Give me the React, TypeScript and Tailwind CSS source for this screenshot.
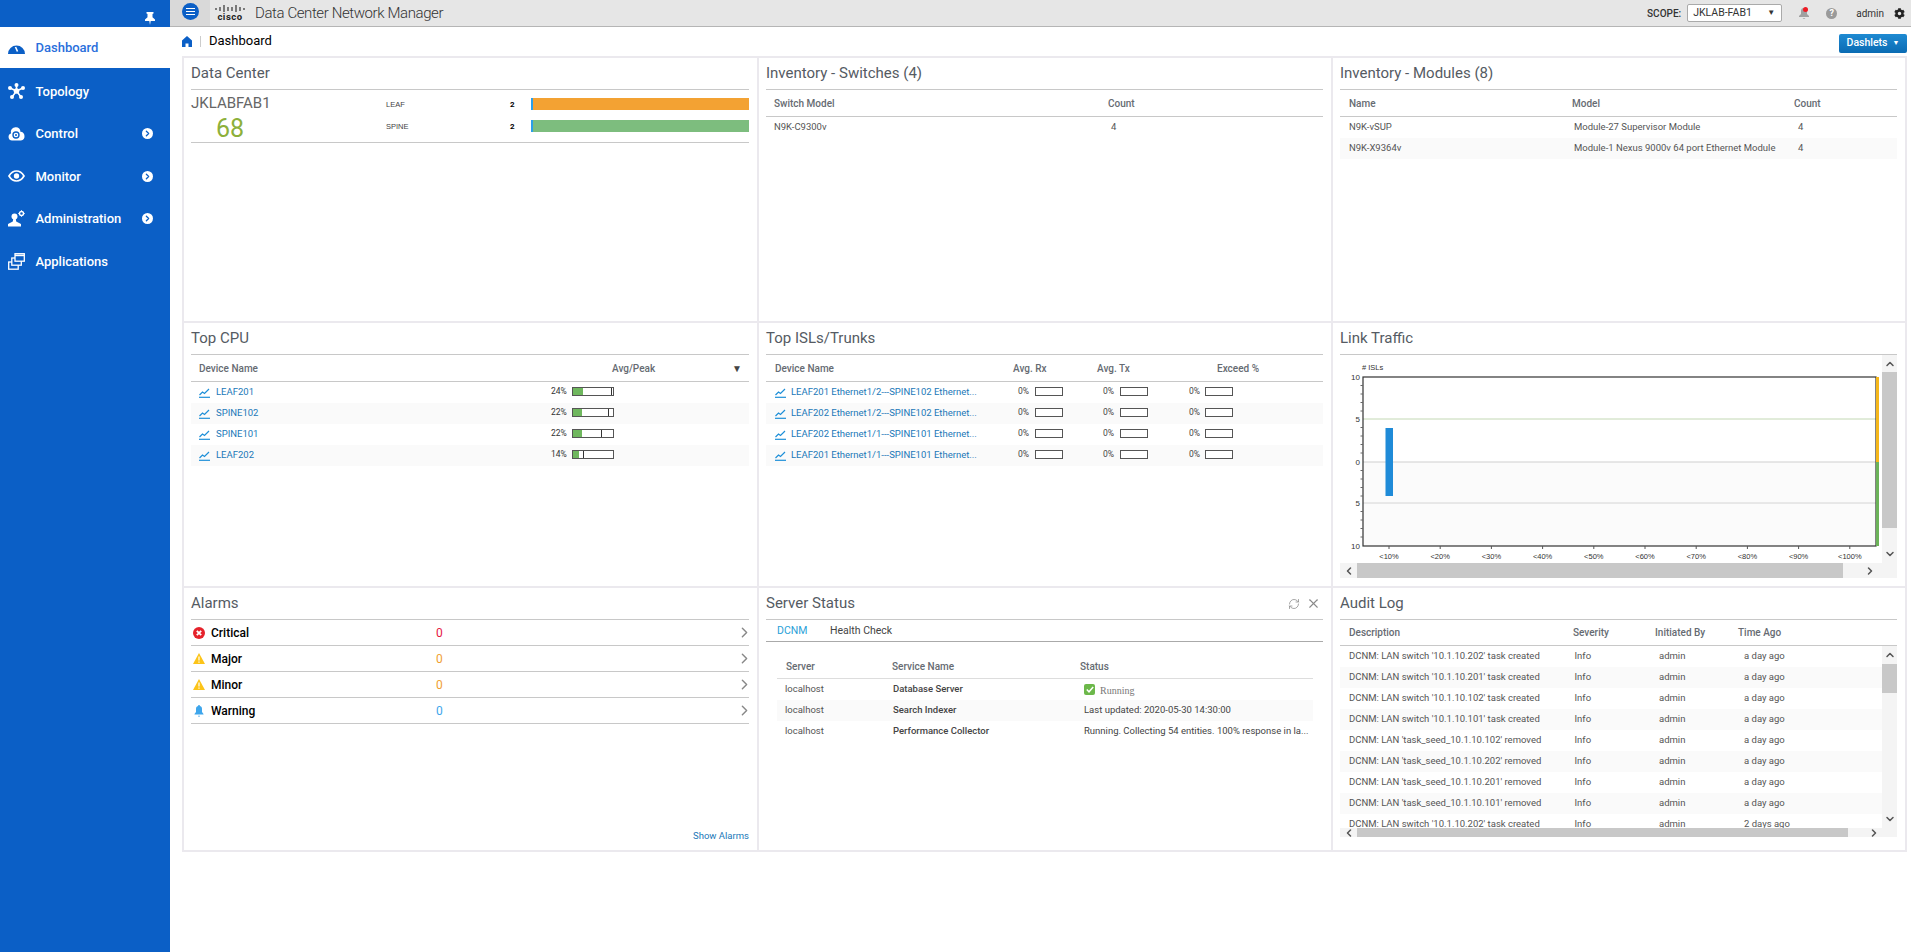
import { ChevronDown, ChevronLeft, ChevronRight, ChevronUp, RefreshCw, X } from 'lucide-react';
import { FaCog } from 'react-icons/fa';
import type { ReactNode } from 'react';

const cpuRows = [
  { name: 'LEAF201', pct: 24, fill: 10, peak: 38 },
  { name: 'SPINE102', pct: 22, fill: 9, peak: 35 },
  { name: 'SPINE101', pct: 22, fill: 9, peak: 28 },
  { name: 'LEAF202', pct: 14, fill: 6, peak: 10 },
];

const islRows = [
  'LEAF201 Ethernet1/2---SPINE102 Ethernet...',
  'LEAF202 Ethernet1/2---SPINE102 Ethernet...',
  'LEAF202 Ethernet1/1---SPINE101 Ethernet...',
  'LEAF201 Ethernet1/1---SPINE101 Ethernet...',
];

const auditRows = [
  ["DCNM: LAN switch '10.1.10.202' task created", 'a day ago'],
  ["DCNM: LAN switch '10.1.10.201' task created", 'a day ago'],
  ["DCNM: LAN switch '10.1.10.102' task created", 'a day ago'],
  ["DCNM: LAN switch '10.1.10.101' task created", 'a day ago'],
  ["DCNM: LAN 'task_seed_10.1.10.102' removed", 'a day ago'],
  ["DCNM: LAN 'task_seed_10.1.10.202' removed", 'a day ago'],
  ["DCNM: LAN 'task_seed_10.1.10.201' removed", 'a day ago'],
  ["DCNM: LAN 'task_seed_10.1.10.101' removed", 'a day ago'],
  ["DCNM: LAN switch '10.1.10.202' task created", '2 days ago'],
];

function GaugeIcon() {
  return (
    <svg width="17" height="13" viewBox="0 0 17 13">
      <path d="M0 13A8.500 8.500 0 0 1 17 13Z" fill="#0b5fc6" />
      <path d="M7.500 6l2 4.500" stroke="#fff" strokeWidth="1.600" />
    </svg>
  );
}

function TopologyIcon() {
  return (
    <svg width="17" height="16" viewBox="0 0 17 16" fill="#fff" stroke="#fff">
      <path d="M8.500 8L8.500 2M8.500 8L2 5M8.500 8L15 5M8.500 8L4 14M8.500 8L13 14" strokeWidth="1.600" />
      <circle cx="8.500" cy="8" r="2.800" stroke="none" />
      <circle cx="8.500" cy="2" r="2" stroke="none" />
      <circle cx="2" cy="5" r="2" stroke="none" />
      <circle cx="15" cy="5" r="2" stroke="none" />
      <circle cx="4" cy="14" r="2" stroke="none" />
      <circle cx="13" cy="14" r="2" stroke="none" />
    </svg>
  );
}

function ControlIcon() {
  return (
    <svg width="17" height="15" viewBox="0 0 17 15">
      <path d="M4 14.500A3.600 3.600 0 0 1 3 7.500 4.800 4.800 0 0 1 8 1.200a4.400 4.400 0 0 1 4.400 4.600A4.400 4.400 0 0 1 13 14.500Z" fill="#fff" />
      <circle cx="8" cy="9" r="3" fill="none" stroke="#0b5fc6" strokeWidth="1.400" />
      <circle cx="8" cy="9" r="1" fill="#0b5fc6" />
    </svg>
  );
}

function EyeIcon() {
  return (
    <svg width="17" height="12" viewBox="0 0 17 12">
      <path d="M1 6C3 2.600 5.600 1 8.500 1S14 2.600 16 6C14 9.400 11.400 11 8.500 11S3 9.400 1 6Z" fill="none" stroke="#fff" strokeWidth="1.700" />
      <circle cx="8.500" cy="6" r="2.700" fill="#fff" />
    </svg>
  );
}

function AdminIcon() {
  return (
    <svg width="17" height="17" viewBox="0 0 17 17">
      <circle cx="6.500" cy="6.500" r="3" fill="#fff" />
      <path d="M5.200 9h2.600l.4 2.600L13 14v2.500H0V14l4.800-2.400Z" fill="#fff" />
      <circle cx="13.500" cy="3.500" r="2" fill="none" stroke="#fff" strokeWidth="1.400" />
      <path d="M13.500 0.300v1M13.500 5.700v1M10.300 3.500h1M15.700 3.500h1" stroke="#fff" strokeWidth="1" />
    </svg>
  );
}

function AppsIcon() {
  return (
    <svg width="17" height="17" viewBox="0 0 17 17" fill="#0b5fc6" stroke="#fff" strokeWidth="1.300">
      <rect x="0.700" y="9" width="9.500" height="7.200" />
      <rect x="3.800" y="5" width="9.500" height="7.200" />
      <rect x="7" y="0.700" width="9.300" height="7.500" />
      <path d="M7 2.400h9.300" strokeWidth="1.600" />
    </svg>
  );
}

function PinIcon() {
  return (
    <svg width="10" height="13" viewBox="0 0 10 13" fill="#fff">
      <path d="M1.500 0h7v1.500L7.500 2v3.200L10 7.500V9H5.700l-.7 4-.7-4H0V7.500l2.500-2.300V2l-1-.5Z" />
    </svg>
  );
}

function TrendIcon() {
  return (
    <svg width="11" height="10" viewBox="0 0 11 10" fill="none" stroke="#1d8fd8" className="shrink-0">
      <path d="M0.500 7L3.500 4l2 1.500L10 1" strokeWidth="1.200" />
      <path d="M0 9.300h11" strokeWidth="1.200" />
    </svg>
  );
}

function HomeIcon() {
  return (
    <svg width="10" height="11" viewBox="0 0 10 11" fill="#0b5fc6">
      <path d="M5 0L10 4.500V11H6.500V7.500h-3V11H0V4.500Z" />
    </svg>
  );
}

function NavItem({ icon, label, arrow }: { icon: ReactNode; label: string; arrow?: boolean }) {
  return (
    <div className="flex h-[42.5px] items-center pl-[8px] text-white">
      <div className="flex w-[27.5px] shrink-0">{icon}</div>
      <span className="text-[13px] font-medium">{label}</span>
      {arrow && (
        <span className="absolute left-[142px] flex h-[11px] w-[11px] items-center justify-center rounded-full bg-white">
          <ChevronRight size={9} strokeWidth={3.500} className="text-[#0b5fc6]" />
        </span>
      )}
    </div>
  );
}

function Sidebar() {
  return (
    <div className="relative h-[952px] w-[170px] shrink-0 bg-[#0b5fc6]">
      <div className="flex h-[27px] items-center justify-end pt-[10px] pr-[15px]">
        <PinIcon />
      </div>
      <div className="flex h-[41px] items-center bg-white pl-[8px]">
        <div className="w-[27.5px]">
          <GaugeIcon />
        </div>
        <span className="mt-[1px] text-[13px] font-medium text-[#2a6fdc]">Dashboard</span>
      </div>
      <div className="mt-[2px]">
        <NavItem icon={<TopologyIcon />} label="Topology" />
        <NavItem icon={<ControlIcon />} label="Control" arrow />
        <NavItem icon={<EyeIcon />} label="Monitor" arrow />
        <NavItem icon={<AdminIcon />} label="Administration" arrow />
        <NavItem icon={<AppsIcon />} label="Applications" />
      </div>
    </div>
  );
}

function CiscoLogo() {
  return (
    <div className="flex w-[30px] flex-col items-center">
      <svg width="30" height="9" viewBox="0 0 30 9" stroke="#333" strokeWidth="1.200">
        <path d="M1 4v2M5 3v4M9 1v7M13 3v4M17 3v4M21 1v7M25 3v4M29 4v2" />
      </svg>
      <span className="-mt-[1px] text-[9.5px] leading-[10px] font-bold tracking-[0.5px] text-[#222]">cisco</span>
    </div>
  );
}

function Header() {
  return (
    <div className="flex h-[27px] items-center border-b border-[#b5b5b5] bg-[#e6e6e6]">
      <div className="flex h-full w-[40px] items-center justify-center bg-[#d9d9d9] pb-[3px]">
        <div className="flex h-[17px] w-[17px] flex-col items-center justify-center gap-[2px] rounded-full bg-[#0b5fc6]">
          <div className="h-[1px] w-[9px] bg-white" />
          <div className="h-[1px] w-[9px] bg-white" />
          <div className="h-[1px] w-[9px] bg-white" />
        </div>
      </div>
      <div className="ml-[5px]">
        <CiscoLogo />
      </div>
      <span className="ml-[10px] text-[15px] font-light tracking-[-0.4px] text-[#333]">
        Data Center Network Manager
      </span>
      <span className="ml-auto text-[10px] font-medium text-[#333]">SCOPE:</span>
      <div className="ml-[6px] flex h-[18px] w-[95px] items-center justify-between rounded-[2px] border border-[#aaa] bg-white pr-[6px] pl-[5px] text-[10.5px] text-[#333]">
        JKLAB-FAB1
        <span className="text-[8px] text-[#333]">▼</span>
      </div>
      <div className="relative ml-[17px]">
        <svg width="10" height="12" viewBox="0 0 10 12" fill="#a0a0a0">
          <path d="M5 1a3 3 0 0 1 3 3v3l2 2v1H0V9l2-2V4a3 3 0 0 1 3-3ZM3.500 11h3L5 12Z" />
        </svg>
        <span className="absolute top-0 right-[1px] h-[5px] w-[5px] rounded-full bg-[#ee1c25]" />
      </div>
      <div className="ml-[17px] flex h-[11px] w-[11px] items-center justify-center rounded-full bg-[#9a9a9a] text-[9px] leading-none font-bold text-white">
        ?
      </div>
      <span className="ml-[19px] text-[10px] text-[#333]">admin</span>
      <FaCog size={11} className="mr-[6px] ml-[10px] text-[#222]" />
    </div>
  );
}

function Card({ title, actions, children }: { title: string; actions?: ReactNode; children?: ReactNode }) {
  return (
    <div className="flex min-h-0 flex-col overflow-hidden bg-white pr-[8px] pl-[7px]">
      <div className="flex h-[32px] shrink-0 items-center justify-between border-b border-[#c8c8c8]">
        <span className="text-[15px] text-[#555b63]">{title}</span>
        {actions}
      </div>
      {children}
    </div>
  );
}

function TableHead({ children }: { children: ReactNode }) {
  return (
    <div className="flex h-[27px] shrink-0 items-center border-b border-[#c8c8c8] text-[10px] font-medium text-[#666b72]">
      {children}
    </div>
  );
}

function DataCenter() {
  return (
    <Card title="Data Center">
      <div className="flex h-[53px] border-b border-[#c8c8c8]">
        <div className="w-[195px] shrink-0">
          <div className="h-[26px] text-[15px] leading-[26px] text-[#666]">JKLABFAB1</div>
          <div className="pl-[25px] text-[25px] leading-[26px] text-[#8db03a]">68</div>
        </div>
        <div className="flex-1 pt-[3px]">
          <div className="flex h-[22px] items-center">
            <span className="mt-[2px] w-[124px] font-['Liberation_Sans',sans-serif] text-[7.5px] text-[#444]">LEAF</span>
            <span className="mt-[2px] w-[21px] text-[8px] font-bold text-black">2</span>
            <div className="h-[12px] flex-1 border-l-[2px] border-[#2c9fe8] bg-[#f3a233]" />
          </div>
          <div className="flex h-[22px] items-center">
            <span className="mt-[2px] w-[124px] font-['Liberation_Sans',sans-serif] text-[7.5px] text-[#444]">SPINE</span>
            <span className="mt-[2px] w-[21px] text-[8px] font-bold text-black">2</span>
            <div className="h-[12px] flex-1 border-l-[2px] border-[#2c9fe8] bg-[#7dbd7e]" />
          </div>
        </div>
      </div>
    </Card>
  );
}

function InventorySwitches() {
  return (
    <Card title="Inventory - Switches (4)">
      <TableHead>
        <span className="w-[342px] pl-[8px]">Switch Model</span>
        <span>Count</span>
      </TableHead>
      <div className="flex h-[21px] items-center text-[9.5px] text-[#555]">
        <span className="w-[345px] pl-[8px]">N9K-C9300v</span>
        <span>4</span>
      </div>
    </Card>
  );
}

function InventoryModules() {
  return (
    <Card title="Inventory - Modules (8)">
      <TableHead>
        <span className="w-[232px] pl-[9px]">Name</span>
        <span className="w-[222px]">Model</span>
        <span>Count</span>
      </TableHead>
      <div className="flex h-[21px] items-center text-[9.5px] text-[#555]">
        <span className="w-[234px] shrink-0 pl-[9px]">N9K-vSUP</span>
        <span className="w-[224px] shrink-0">Module-27 Supervisor Module</span>
        <span>4</span>
      </div>
      <div className="flex h-[21px] items-center bg-[#fafafa] text-[9.5px] text-[#555]">
        <span className="w-[234px] shrink-0 pl-[9px]">N9K-X9364v</span>
        <span className="w-[224px] shrink-0">Module-1 Nexus 9000v 64 port Ethernet Module</span>
        <span>4</span>
      </div>
    </Card>
  );
}

function TopCpu() {
  return (
    <Card title="Top CPU">
      <TableHead>
        <span className="w-[421px] pl-[8px]">Device Name</span>
        <span>Avg/Peak</span>
        <span className="ml-auto pr-[7px] text-[10px] text-[#444]">▼</span>
      </TableHead>
      {cpuRows.map((row, i) => (
        <div key={row.name} className={`flex h-[21px] items-center ${i % 2 ? 'bg-[#fafafa]' : ''}`}>
          <div className="flex w-[360px] items-center gap-[6px] pl-[8px] text-[9.5px] text-[#1a78b8]">
            <TrendIcon />
            {row.name}
          </div>
          <span className="mb-[3px] w-[21px] text-[8.5px] text-[#333]">{row.pct}%</span>
          <div className="relative mb-[3px] h-[9px] w-[42px] border border-[#555] bg-white">
            <div className="h-full bg-[#6fb75e]" style={{ width: row.fill }} />
            <div className="absolute top-0 h-full w-[1px] bg-[#333]" style={{ left: row.peak }} />
          </div>
        </div>
      ))}
    </Card>
  );
}

function Box() {
  return <div className="mb-[3px] h-[9px] w-[28px] shrink-0 border border-[#555] bg-white" />;
}

function TopIsls() {
  return (
    <Card title="Top ISLs/Trunks">
      <TableHead>
        <span className="w-[247px] pl-[9px]">Device Name</span>
        <span className="w-[84px]">Avg. Rx</span>
        <span className="w-[120px]">Avg. Tx</span>
        <span>Exceed %</span>
      </TableHead>
      {islRows.map((name, i) => (
        <div key={name} className={`flex h-[21px] items-center ${i % 2 ? 'bg-[#fafafa]' : ''}`}>
          <div className="flex w-[252px] shrink-0 items-center gap-[5px] pl-[9px] text-[9.5px] whitespace-nowrap text-[#1a78b8]">
            <TrendIcon />
            {name}
          </div>
          <span className="mb-[3px] w-[17px] text-[8.5px] text-[#444]">0%</span>
          <Box />
          <span className="mb-[3px] ml-[40px] w-[17px] text-[8.5px] text-[#444]">0%</span>
          <Box />
          <span className="mb-[3px] ml-[41px] w-[16px] text-[8.5px] text-[#444]">0%</span>
          <Box />
        </div>
      ))}
    </Card>
  );
}

function TrafficChart() {
  const labels = ['<10%', '<20%', '<30%', '<40%', '<50%', '<60%', '<70%', '<80%', '<90%', '<100%'];
  const minor = [30.5, 39, 47.5, 56, 72.5, 81, 89.5, 98, 115.5, 124, 132.5, 141, 156.5, 165, 173.5, 182];
  return (
    <svg width="542" height="208" viewBox="0 0 542 208" className="shrink-0" fontFamily="Liberation Sans, sans-serif">
      <rect x="23" y="107" width="513" height="84" fill="#fbfbfb" />
      <path d="M23 64H536" stroke="#c3d8b4" />
      <path d="M23 107H536" stroke="#cfcfcf" />
      <path d="M23 148H536" stroke="#d4d4d4" />
      <rect x="45.5" y="73" width="7.5" height="68" fill="#1f8bd8" />
      <rect x="23" y="22" width="513" height="169" fill="none" stroke="#333" strokeWidth="1.2" />
      <rect x="536" y="22" width="3" height="85" fill="#f5b71a" />
      <rect x="536" y="107" width="3" height="84" fill="#6cb359" />
      {minor.map((y) => (
        <path key={y} d={`M20.5 ${y}H23`} stroke="#666" />
      ))}
      {[
        ['10', 25],
        ['5', 67],
        ['0', 110],
        ['5', 151],
        ['10', 194],
      ].map(([t, y], i) => (
        <text key={i} x="20" y={y} textAnchor="end" fontSize="8" fill="#333">
          {t}
        </text>
      ))}
      <text x="22" y="15" fontSize="7.5" fill="#333">
        # ISLs
      </text>
      {labels.map((t, i) => (
        <g key={t}>
          <path d={`M${49 + i * 51.2} 191v3`} stroke="#555" />
          <text x={49 + i * 51.2} y="204" textAnchor="middle" fontSize="7.5" fill="#333">
            {t}
          </text>
        </g>
      ))}
    </svg>
  );
}

function LinkTraffic() {
  return (
    <Card title="Link Traffic">
      <div className="flex h-[208px] shrink-0">
        <TrafficChart />
        <div className="w-[15px] shrink-0 bg-[#f4f4f4]">
          <div className="flex h-[17px] items-center justify-center text-[#555]">
            <ChevronUp size={12} strokeWidth={3} />
          </div>
          <div className="h-[156px] bg-[#c8c8c8]" />
          <div className="flex h-[35px] items-end justify-center pb-[3px] text-[#555]">
            <ChevronDown size={12} strokeWidth={3} />
          </div>
        </div>
      </div>
      <div className="flex h-[15px] shrink-0 items-center bg-[#f4f4f4] text-[#555]">
        <div className="flex w-[17px] justify-center">
          <ChevronLeft size={12} strokeWidth={3} />
        </div>
        <div className="h-full w-[486px] bg-[#c8c8c8]" />
        <div className="ml-[21px] flex">
          <ChevronRight size={12} strokeWidth={3} />
        </div>
      </div>
    </Card>
  );
}

function CriticalIcon() {
  return (
    <svg width="12" height="12" viewBox="0 0 12 12">
      <circle cx="6" cy="6" r="6" fill="#e5222b" />
      <path d="M3.800 3.800l4.400 4.400M8.200 3.800l-4.400 4.400" stroke="#fff" strokeWidth="1.800" />
    </svg>
  );
}

function TriangleIcon() {
  return (
    <svg width="12" height="11" viewBox="0 0 12 11">
      <path d="M6 0L12 11H0Z" fill="#fcc419" />
      <path d="M6 3.500v4M6 8.500v1.200" stroke="#fff" strokeWidth="1.200" />
    </svg>
  );
}

function BellIcon() {
  return (
    <svg width="12" height="12" viewBox="0 0 12 12" fill="#3ea6ec">
      <path d="M6 0a1 1 0 0 1 1 1c1.500.4 2 1.500 2 3v3l1.500 2v.5h-9V9L3 7V4c0-1.500.5-2.600 2-3a1 1 0 0 1 1-1ZM5.500 10.500h1V12h-1Z" />
    </svg>
  );
}

function Alarms() {
  const rows = [
    { icon: <CriticalIcon />, label: 'Critical', color: 'text-[#e5173f]' },
    { icon: <TriangleIcon />, label: 'Major', color: 'text-[#f0a030]' },
    { icon: <TriangleIcon />, label: 'Minor', color: 'text-[#f0a030]' },
    { icon: <BellIcon />, label: 'Warning', color: 'text-[#3ea6ec]' },
  ];
  return (
    <Card title="Alarms">
      {rows.map((r) => (
        <div key={r.label} className="flex h-[26px] shrink-0 items-center border-b border-[#c8c8c8]">
          <div className="flex w-[20px] shrink-0 pl-[2px]">{r.icon}</div>
          <span className="w-[225px] text-[12px] font-medium text-black">{r.label}</span>
          <span className={`text-[12px] ${r.color}`}>0</span>
          <ChevronRight size={17} strokeWidth={2} className="mr-[-4px] ml-auto text-[#888]" />
        </div>
      ))}
      <div className="mt-auto pb-[7px] text-right text-[9.5px] text-[#1a78b8]">Show Alarms</div>
    </Card>
  );
}

function ServerStatus() {
  const rows = [
    { service: 'Database Server', status: null },
    { service: 'Search Indexer', status: 'Last updated: 2020-05-30 14:30:00' },
    { service: 'Performance Collector', status: 'Running. Collecting 54 entities. 100% response in la...' },
  ];
  return (
    <Card
      title="Server Status"
      actions={
        <div className="flex items-center gap-[6px] pr-[2px] text-[#8a8a8a]">
          <RefreshCw size={12} strokeWidth={1.5} />
          <X size={15} strokeWidth={1.8} />
        </div>
      }
    >
      <div className="flex h-[22px] shrink-0 items-center border-b border-[#aaa] pl-[11px] text-[10.5px]">
        <span className="w-[53px] text-[#2a9fd8]">DCNM</span>
        <span className="text-[#444]">Health Check</span>
      </div>
      <div className="mt-[13px] mr-[10px] ml-[11px]">
        <div className="flex h-[24px] items-center border-b border-[#ddd] text-[10px] font-medium text-[#666b72]">
          <span className="w-[115px] shrink-0 pl-[9px]">Server</span>
          <span className="w-[188px] shrink-0">Service Name</span>
          <span>Status</span>
        </div>
        {rows.map((r, i) => (
          <div key={r.service} className={`flex h-[21px] items-center text-[9.5px] ${i === 1 ? 'bg-[#fafafa]' : ''}`}>
            <span className="w-[116px] shrink-0 pl-[8px] text-[#555]">localhost</span>
            <span className="w-[191px] shrink-0 font-medium text-[#444]">{r.service}</span>
            {r.status ? (
              <span className="whitespace-nowrap text-[#444]">{r.status}</span>
            ) : (
              <span className="flex items-center gap-[5px]">
                <span className="flex h-[11px] w-[11px] items-center justify-center rounded-[2px] bg-[#6cb84a] text-white">
                  <svg width="8" height="7" viewBox="0 0 8 7" fill="none" stroke="#fff" strokeWidth="1.500">
                    <path d="M0.800 3.500L3 5.800 7.200 1" />
                  </svg>
                </span>
                <span className="mt-[2px] font-['Liberation_Serif',serif] text-[10px] text-[#777]">Running</span>
              </span>
            )}
          </div>
        ))}
      </div>
    </Card>
  );
}

function AuditLog() {
  return (
    <Card title="Audit Log">
      <div className="flex h-[26px] shrink-0 items-center border-b border-[#c8c8c8] text-[10px] font-medium text-[#666b72]">
        <span className="w-[233px] pl-[9px]">Description</span>
        <span className="w-[82px]">Severity</span>
        <span className="w-[83px]">Initiated By</span>
        <span>Time Ago</span>
      </div>
      <div className="flex h-[182px] shrink-0">
        <div className="flex-1 overflow-hidden">
          {auditRows.map(([desc, when], i) => (
            <div key={i} className={`flex h-[21px] items-center text-[9.5px] text-[#555] ${i % 2 ? 'bg-[#fafafa]' : ''}`}>
              <span className="w-[234.5px] shrink-0 pl-[9px] whitespace-nowrap">{desc}</span>
              <span className="w-[84.5px] shrink-0">Info</span>
              <span className="w-[85px] shrink-0">admin</span>
              <span>{when}</span>
            </div>
          ))}
        </div>
        <div className="w-[15px] shrink-0 bg-[#f4f4f4]">
          <div className="flex h-[18px] items-center justify-center text-[#555]">
            <ChevronUp size={12} strokeWidth={3} />
          </div>
          <div className="h-[29px] bg-[#c8c8c8]" />
          <div className="flex h-[135px] items-end justify-center pb-[3px] text-[#555]">
            <ChevronDown size={12} strokeWidth={3} />
          </div>
        </div>
      </div>
      <div className="flex h-[9px] shrink-0 overflow-hidden bg-[#f4f4f4] text-[#555]">
        <div className="flex w-[17px] justify-center">
          <ChevronLeft size={12} strokeWidth={3} className="-mt-[1px]" />
        </div>
        <div className="h-full w-[491px] bg-[#c8c8c8]" />
        <div className="ml-[20px] flex">
          <ChevronRight size={12} strokeWidth={3} className="-mt-[1px]" />
        </div>
      </div>
    </Card>
  );
}

export default function App() {
  return (
    <div className="flex h-[952px] overflow-hidden bg-white font-['Roboto',Arial,sans-serif]">
      <Sidebar />
      <div className="min-w-0 flex-1">
        <Header />
        <div className="flex h-[29px] items-center pr-[4px] pl-[12px]">
          <HomeIcon />
          <div className="mx-[8px] h-[11px] w-[1px] bg-[#ccc]" />
          <span className="-mt-[1px] text-[13px] text-black">Dashboard</span>
          <div className="mt-[3px] ml-auto flex h-[19px] w-[68px] items-center justify-center gap-[5px] rounded-[2px] bg-gradient-to-b from-[#1e8ad2] to-[#0a6bb3] text-[10.5px] font-medium text-white">
            Dashlets
            <span className="text-[7px]">▼</span>
          </div>
        </div>
        <div className="mr-[4px] ml-[12px] grid grid-cols-[573px_572px_572px] grid-rows-[263px_263px_262px] gap-[2px] bg-[#ebe9ee] p-[2px]">
          <DataCenter />
          <InventorySwitches />
          <InventoryModules />
          <TopCpu />
          <TopIsls />
          <LinkTraffic />
          <Alarms />
          <ServerStatus />
          <AuditLog />
        </div>
      </div>
    </div>
  );
}
